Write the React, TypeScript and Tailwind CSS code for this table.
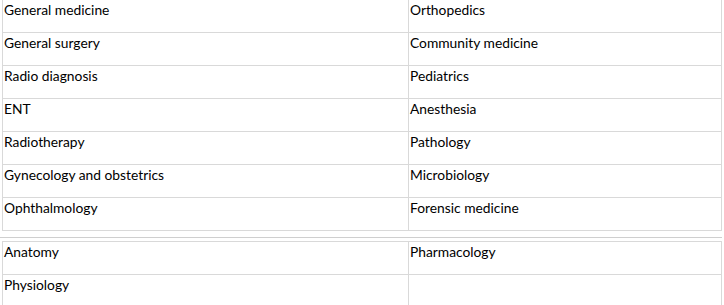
import React from 'react';

const upper: [string, string][] = [
  ['General medicine', 'Orthopedics'],
  ['General surgery', 'Community medicine'],
  ['Radio diagnosis', 'Pediatrics'],
  ['ENT', 'Anesthesia'],
  ['Radiotherapy', 'Pathology'],
  ['Gynecology and obstetrics', 'Microbiology'],
  ['Ophthalmology', 'Forensic medicine'],
];

const lower: [string, string][] = [
  ['Anatomy', 'Pharmacology'],
  ['Physiology', ''],
];

const Row = ({ left, right }: { left: string; right: string }) => (
  <div className="flex h-[33px] border-b border-[#d9d9d9]">
    <div className="w-[406px] border-r border-[#d9d9d9] pl-[1px] pt-[1px] leading-[18px]">{left}</div>
    <div className="flex-1 pl-[1px] pt-[1px] leading-[18px]">{right}</div>
  </div>
);

const App = () => {
  return (
    <div
      className="w-[724px] h-[305px] overflow-hidden bg-white text-[13.8px] text-black"
      style={{ fontFamily: 'Lato, "Liberation Sans", sans-serif' }}
    >
      {/* first table, top border sits above the viewport */}
      <div className="ml-[2px] w-[720px] border-x border-[#d9d9d9]">
        {upper.map(([l, r]) => (
          <Row key={l} left={l} right={r} />
        ))}
      </div>

      <div className="mt-[6px] h-px w-[722px] bg-[#cfcfcf]" />

      <div className="ml-[2px] mt-[3px] w-[720px] border-x border-t border-[#d9d9d9]">
        {lower.map(([l, r]) => (
          <Row key={l} left={l} right={r} />
        ))}
      </div>
    </div>
  );
};

export default App;
